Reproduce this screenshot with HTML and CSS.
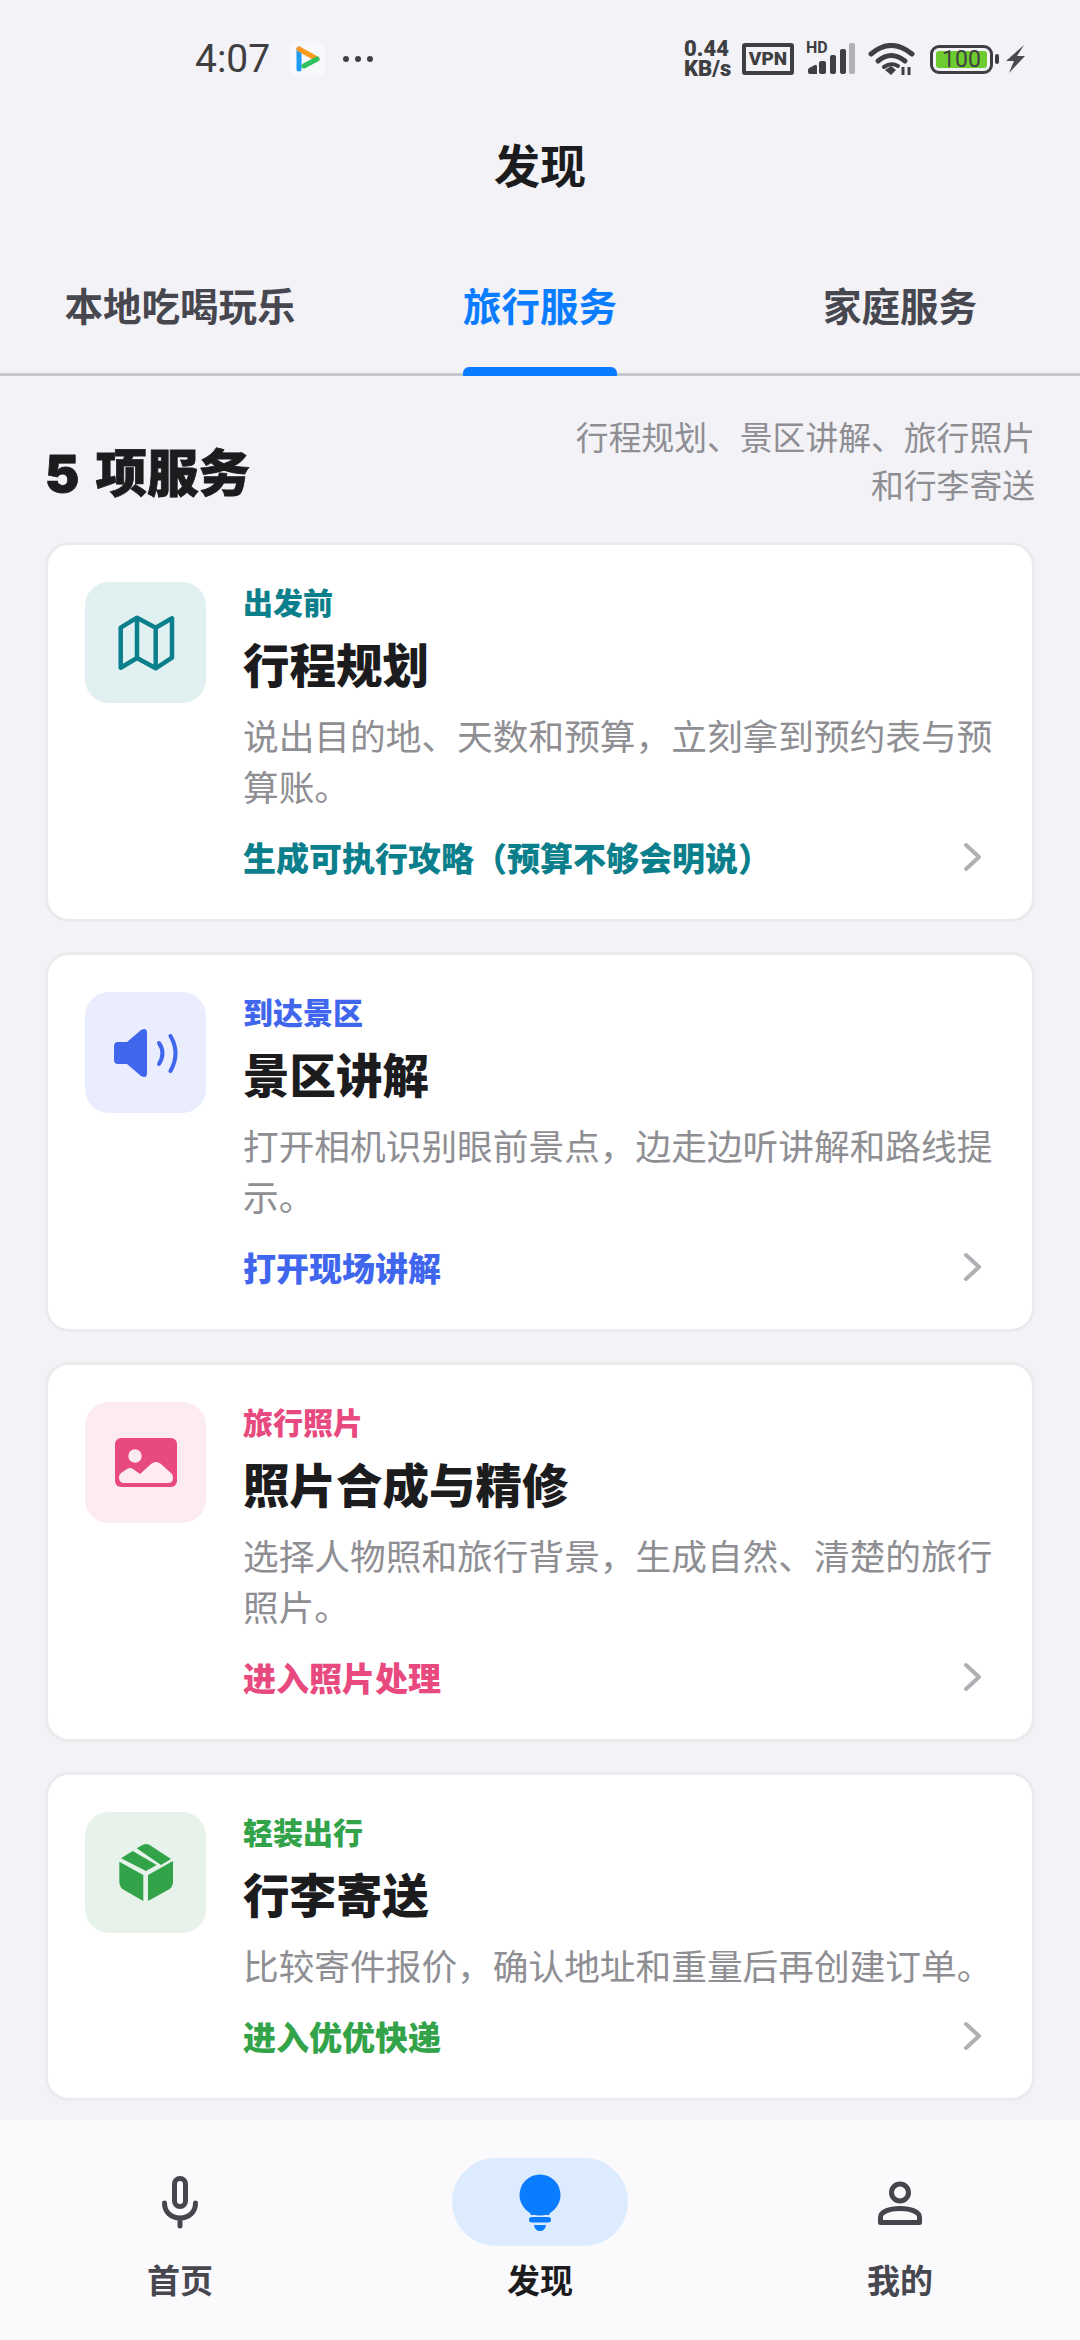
FILE: index.html
```html
<!DOCTYPE html>
<html lang="zh-CN">
<head>
    <meta charset="UTF-8">
    <meta name="viewport" content="width=device-width, initial-scale=1.0">
    <title>发现</title>
    <link rel="stylesheet" href="styles.css">
</head>
<body>
    <div class="app">
        <div class="status-bar">
            <div class="status-left">
                <span class="time">4:07</span>
                <span class="app-badge">
                    <svg width="36" height="36" viewBox="0 0 36 36">
                        <path d="M10 8 L10 28" stroke="#1c9cf5" stroke-width="5" stroke-linecap="round" fill="none"/>
                        <path d="M10 8 L28 18" stroke="#fb9a1f" stroke-width="5" stroke-linecap="round" fill="none"/>
                        <path d="M28 18 L15 25" stroke="#2fc25f" stroke-width="5" stroke-linecap="round" fill="none"/>
                    </svg>
                </span>
                <span class="more-dots"><i></i><i></i><i></i></span>
            </div>
            <div class="status-right">
                <span class="net-speed">0.44<br>KB/s</span>
                <span class="vpn">VPN</span>
                <span class="signal">
                    <span class="hd">HD</span>
                    <svg width="48" height="32" viewBox="0 0 48 32">
                        <path d="M0 29 V27 Q0 25 3 24 L7 22 Q9 21 9 24 V31 H2 Q0 31 0 29 Z" fill="#3f3f41"/>
                        <rect x="11" y="18" width="7" height="13" rx="2" fill="#3f3f41"/>
                        <rect x="22" y="12" width="6" height="19" rx="2" fill="#3f3f41"/>
                        <rect x="32" y="6" width="6" height="25" rx="2" fill="#3f3f41"/>
                        <rect x="41" y="0" width="6" height="31" rx="2" fill="#b2b2b4"/>
                    </svg>
                </span>
                <svg class="wifi" width="47" height="32" viewBox="0 0 47 32">
                    <path d="M3 11 Q23 -6 44 11" stroke="#3f3f41" stroke-width="5" stroke-linecap="round" fill="none"/>
                    <path d="M10 18 Q23 7 37 18" stroke="#3f3f41" stroke-width="5" stroke-linecap="round" fill="none"/>
                    <path d="M16 24 Q23 19 30 23" stroke="#3f3f41" stroke-width="4" stroke-linecap="round" fill="none"/>
                    <path d="M17 27 L23 23 L28 27 L23 32 Z" fill="#3f3f41"/>
                    <path d="M35 24 V32 M41 24 V32" stroke="#3f3f41" stroke-width="3" fill="none"/>
                </svg>
                <span class="battery"><span class="battery-fill">100</span></span>
                <span class="battery-tip"></span>
                <svg class="bolt" width="19" height="28" viewBox="0 0 19 28">
                    <path d="M18 0 L0 16 L8 16 L3 28 L19 11 L11 11 Z" fill="#4a4a4c"/>
                </svg>
            </div>
        </div>

        <div class="page-title">发现</div>

        <div class="tabs">
            <div class="tab">本地吃喝玩乐</div>
            <div class="tab active">旅行服务</div>
            <div class="tab">家庭服务</div>
        </div>

        <div class="section-head">
            <h2>5 项服务</h2>
            <p>行程规划、景区讲解、旅行照片<br>和行李寄送</p>
        </div>

        <div class="card-list">
            <div class="card teal">
                <div class="card-icon">
                    <svg width="60" height="60" viewBox="0 0 60 60">
                        <path d="M4.7 14.7 L21 4.7 L39.7 14.7 L56 5.3 V44.7 L39.7 55.3 L21 45 L4.7 54.7 Z M21 4.7 V45 M39.7 14.7 V55.3" stroke="#0b7f8b" stroke-width="4.5" stroke-linejoin="round" fill="none"/>
                    </svg>
                </div>
                <div class="card-body">
                    <div class="kicker">出发前</div>
                    <div class="card-title">行程规划</div>
                    <div class="card-desc">说出目的地、天数和预算，立刻拿到预约表与预算账。</div>
                    <div class="card-link">
                        <span>生成可执行攻略（预算不够会明说）</span>
                        <svg class="chevron" width="20" height="30" viewBox="0 0 20 30"><path d="M3 3 L16 15 L3 27" stroke="#b0b0b4" stroke-width="4" stroke-linecap="round" stroke-linejoin="round" fill="none"/></svg>
                    </div>
                </div>
            </div>

            <div class="card blue">
                <div class="card-icon">
                    <svg width="64" height="50" viewBox="0 0 64 50">
                        <path d="M4 14 H13 L27 2 Q33 -1 33 5 V45 Q33 51 27 48 L13 36 H4 Q0 36 0 32 V18 Q0 14 4 14 Z" fill="#4166ee"/>
                        <path d="M45 15 Q52 25 45 36" stroke="#4166ee" stroke-width="4" stroke-linecap="round" fill="none"/>
                        <path d="M56.5 8 Q66.5 25 56.5 43" stroke="#4166ee" stroke-width="4" stroke-linecap="round" fill="none"/>
                    </svg>
                </div>
                <div class="card-body">
                    <div class="kicker">到达景区</div>
                    <div class="card-title">景区讲解</div>
                    <div class="card-desc">打开相机识别眼前景点，边走边听讲解和路线提示。</div>
                    <div class="card-link">
                        <span>打开现场讲解</span>
                        <svg class="chevron" width="20" height="30" viewBox="0 0 20 30"><path d="M3 3 L16 15 L3 27" stroke="#b0b0b4" stroke-width="4" stroke-linecap="round" stroke-linejoin="round" fill="none"/></svg>
                    </div>
                </div>
            </div>

            <div class="card pink">
                <div class="card-icon">
                    <svg width="62" height="50" viewBox="0 0 62 50">
                        <rect x="0" y="0" width="62" height="49" rx="6" fill="#e84a80"/>
                        <circle cx="20" cy="18" r="6.7" fill="#fcebf1"/>
                        <path d="M4 39 Q4 37 6 35 L12 31 Q15 29 18 31 L25 36 L36 26 Q41 22 46 26 L57 36 Q58 38 58 40 Q58 45 53 45 H9 Q4 45 4 39 Z" fill="#fcebf1"/>
                    </svg>
                </div>
                <div class="card-body">
                    <div class="kicker">旅行照片</div>
                    <div class="card-title">照片合成与精修</div>
                    <div class="card-desc">选择人物照和旅行背景，生成自然、清楚的旅行照片。</div>
                    <div class="card-link">
                        <span>进入照片处理</span>
                        <svg class="chevron" width="20" height="30" viewBox="0 0 20 30"><path d="M3 3 L16 15 L3 27" stroke="#b0b0b4" stroke-width="4" stroke-linecap="round" stroke-linejoin="round" fill="none"/></svg>
                    </div>
                </div>
            </div>

            <div class="card green">
                <div class="card-icon">
                    <svg width="54" height="58" viewBox="0 0 54 58">
                        <path d="M17.7 4.3 L23 1.2 Q27 -1 31 1.2 L52 15 L42 21 Z" fill="#33a34a"/>
                        <path d="M13.7 7 L37.7 21 L27 27 L2 14.3 Z" fill="#33a34a"/>
                        <path d="M0.3 17.7 L24.3 31 V57 L5 46 Q0.3 43 0.3 38 Z" fill="#33a34a"/>
                        <path d="M54 17 L29 31 V57 L49 46 Q54 43 54 38 Z" fill="#33a34a"/>
                    </svg>
                </div>
                <div class="card-body">
                    <div class="kicker">轻装出行</div>
                    <div class="card-title">行李寄送</div>
                    <div class="card-desc">比较寄件报价，确认地址和重量后再创建订单。</div>
                    <div class="card-link">
                        <span>进入优优快递</span>
                        <svg class="chevron" width="20" height="30" viewBox="0 0 20 30"><path d="M3 3 L16 15 L3 27" stroke="#b0b0b4" stroke-width="4" stroke-linecap="round" stroke-linejoin="round" fill="none"/></svg>
                    </div>
                </div>
            </div>
        </div>

        <div class="bottom-nav">
            <div class="nav-item">
                <div class="nav-icon">
                    <svg width="40" height="56" viewBox="0 0 40 56">
                        <rect x="14.5" y="4.5" width="11" height="28" rx="5.5" stroke="#44454d" stroke-width="5" fill="none"/>
                        <path d="M4.5 29 C4.5 38 11 44 20 44 C29 44 35.5 38 35.5 29 M20 44 V52" stroke="#44454d" stroke-width="5" stroke-linecap="round" fill="none"/>
                    </svg>
                </div>
                <span>首页</span>
            </div>
            <div class="nav-item active">
                <div class="nav-icon">
                    <svg width="44" height="58" viewBox="0 0 44 58">
                        <circle cx="22" cy="22" r="20.5" fill="#0a7cff"/>
                        <path d="M9 34 L13 42 H31 L35 34 Z" fill="#0a7cff"/>
                        <rect x="11" y="44" width="22" height="5.5" rx="2.75" fill="#0a7cff"/>
                        <path d="M16 52 H28 Q27 58 22 58 Q17 58 16 52 Z" fill="#0a7cff"/>
                    </svg>
                </div>
                <span>发现</span>
            </div>
            <div class="nav-item">
                <div class="nav-icon">
                    <svg width="46" height="48" viewBox="0 0 46 48">
                        <circle cx="23" cy="14.5" r="8.5" stroke="#44454d" stroke-width="5" fill="none"/>
                        <path d="M3.5 39 C3.5 34 12 30.5 23 30.5 C34 30.5 42.5 34 42.5 39 V44.5 H3.5 Z" stroke="#44454d" stroke-width="5" stroke-linejoin="round" fill="none"/>
                    </svg>
                </div>
                <span>我的</span>
            </div>
        </div>
    </div>
</body>
</html>
```

FILE: styles.css
```css
* {
    box-sizing: border-box;
}
body {
    margin: 0;
    background-color: #f2f2f7;
    font-family: "Noto Sans CJK SC", "Noto Sans", sans-serif;
    color: #1c1c1e;
}
.app {
    width: 1080px;
    height: 2340px;
    display: flex;
    flex-direction: column;
    overflow: hidden;
}

/* status bar */
.status-bar {
    height: 118px;
    padding: 36px 55px 0 195px;
    display: flex;
    justify-content: space-between;
    align-items: flex-start;
    color: #3f3f41;
}
.status-left {
    display: flex;
    align-items: center;
    height: 46px;
}
.time {
    font-family: Roboto, sans-serif;
    font-size: 39px;
    width: 94px;
}
.app-badge {
    width: 36px;
    height: 36px;
    border-radius: 8px;
    background-color: #f6f8f9;
}
.more-dots {
    display: flex;
    gap: 6px;
    margin-left: 18px;
}
.more-dots i {
    width: 6px;
    height: 6px;
    border-radius: 50%;
    background-color: #3f3f41;
}
.status-right {
    display: flex;
    align-items: center;
    height: 46px;
}
.net-speed {
    display: block;
    width: 48px;
    font-family: Roboto, sans-serif;
    font-size: 22px;
    font-weight: 900;
    line-height: 20px;
    white-space: nowrap;
}
.vpn {
    width: 52px;
    height: 32px;
    margin-left: 10px;
    border: 4px solid #3f3f41;
    border-radius: 3px;
    font-family: Roboto, sans-serif;
    font-size: 19px;
    font-weight: 900;
    line-height: 24px;
    text-align: center;
}
.signal {
    position: relative;
    margin-left: 14px;
    width: 48px;
    height: 32px;
    display: block;
}
.hd {
    position: absolute;
    left: -2px;
    top: -3px;
    font-family: Roboto, sans-serif;
    font-size: 16px;
    font-weight: 700;
    line-height: 16px;
}
.wifi {
    margin-left: 12px;
}
.battery {
    width: 63px;
    height: 29px;
    margin-left: 15px;
    padding: 3px;
    border: 3px solid #3f3f41;
    border-radius: 9px;
}
.battery-fill {
    display: block;
    height: 17px;
    border-radius: 3px;
    background-color: #6ecb2f;
    font-family: Roboto, sans-serif;
    font-size: 23px;
    line-height: 17px;
    text-align: center;
}
.battery-tip {
    width: 4px;
    height: 10px;
    margin-left: 2px;
    border-radius: 2px;
    background-color: #3f3f41;
}
.bolt {
    margin-left: 7px;
}

.page-title {
    height: 98px;
    text-align: center;
    font-size: 46px;
    font-weight: 700;
    line-height: 90px;
}

/* tabs */
.tabs {
    height: 160px;
    padding-top: 52px;
    display: grid;
    grid-template-columns: repeat(3, 1fr);
    border-bottom: 3px solid #c7c8cf;
}
.tab {
    display: flex;
    justify-content: center;
    position: relative;
    font-size: 38.5px;
    font-weight: 600;
    line-height: 72px;
    color: #46474f;
}
.tab.active {
    color: #0a7cff;
}
.tab.active::after {
    content: "";
    position: absolute;
    left: 103px;
    right: 103px;
    bottom: -3px;
    height: 9px;
    border-radius: 6px 6px 0 0;
    background-color: #0a7cff;
}

.section-head {
    padding: 36px 45px 0;
    height: 166px;
    display: flex;
    justify-content: space-between;
    align-items: flex-start;
}
.section-head h2 {
    margin: 25px 0 0;
    font-family: Inter, "Noto Sans CJK SC", sans-serif;
    font-size: 51.5px;
    font-weight: 900;
    line-height: 72px;
    word-spacing: 6px;
    -webkit-text-stroke: 0.8px #1c1c1e;
}
.section-head p {
    margin: 0;
    text-align: right;
    font-size: 32.8px;
    line-height: 48px;
    color: #8e8e93;
}

/* cards */
.card-list {
    padding: 0 45px;
    display: flex;
    flex-direction: column;
    gap: 30px;
}
.card {
    display: flex;
    gap: 37px;
    padding: 37px 37px 38px;
    background-color: #fff;
    border: 3px solid #ebebee;
    border-radius: 24px;
}
.card-icon {
    flex: none;
    width: 121px;
    height: 121px;
    border-radius: 24px;
    display: flex;
    align-items: center;
    justify-content: center;
}
.card-body {
    flex: 1;
    min-width: 0;
}
.kicker {
    font-size: 30px;
    font-weight: 900;
    line-height: 38px;
}
.card-title {
    margin-top: 9px;
    font-size: 46.5px;
    font-weight: 900;
    line-height: 68px;
}
.card-desc {
    margin-top: 12px;
    font-size: 35.7px;
    line-height: 51px;
    color: #8e8e93;
}
.card-link {
    margin-top: 22px;
    display: flex;
    justify-content: space-between;
    align-items: center;
    font-size: 33px;
    font-weight: 900;
    line-height: 48px;
}
.chevron {
    margin-right: 12px;
}
.teal .card-icon { background-color: #e1f0f1; }
.teal .kicker, .teal .card-link span { color: #0b7f8b; }
.blue .card-icon { background-color: #e9edfd; }
.blue .kicker, .blue .card-link span { color: #4166ee; }
.pink .card-icon { background-color: #fcebf1; }
.pink .kicker, .pink .card-link span { color: #e84a80; }
.green .card-icon { background-color: #e7f3ea; }
.green .kicker, .green .card-link span { color: #33a34a; }

/* bottom nav */
.bottom-nav {
    margin-top: auto;
    height: 220px;
    background-color: #fafafc;
    display: grid;
    grid-template-columns: repeat(3, 1fr);
    padding-top: 38px;
}
.nav-item {
    display: flex;
    flex-direction: column;
    align-items: center;
    font-size: 33px;
    font-weight: 700;
    line-height: 48px;
    color: #46474f;
}
.nav-icon {
    width: 176px;
    height: 88px;
    border-radius: 44px;
    margin-bottom: 9px;
    display: flex;
    align-items: center;
    justify-content: center;
}
.nav-item.active {
    color: #1c1c1e;
}
.nav-item.active .nav-icon {
    background-color: #dcebfd;
}
```
